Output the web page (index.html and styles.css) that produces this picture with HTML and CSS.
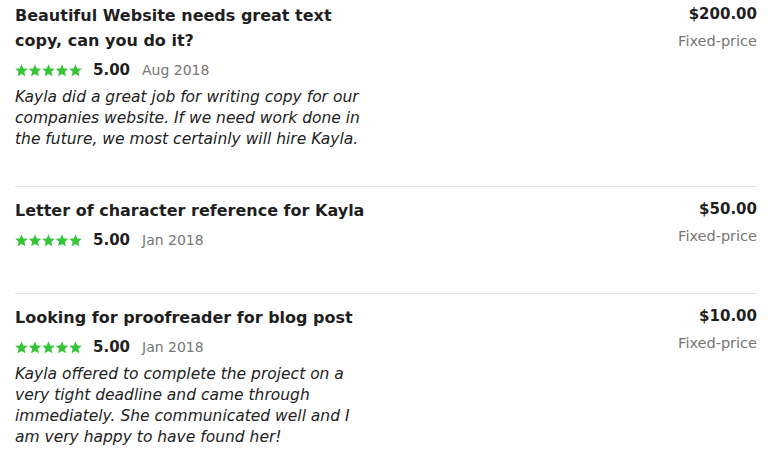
FILE: index.html
```html
<!DOCTYPE html>
<html>
<head>
<meta charset="utf-8">
<link rel="stylesheet" href="styles.css">
</head>
<body>
<svg class="defs" width="0" height="0" aria-hidden="true">
  <defs>
    <path id="star" d="M6.5 0.3 L8.26 4.47 L12.78 4.86 L9.35 7.83 L10.38 12.24 L6.5 9.9 L2.62 12.24 L3.65 7.83 L0.22 4.86 L4.74 4.47 Z"/>
  </defs>
</svg>
<div class="list">
  <div class="item">
    <div class="main">
      <h3 class="title">Beautiful Website needs great text copy, can you do it?</h3>
      <div class="meta">
        <svg class="stars" viewBox="0 0 67 13" width="67" height="13"><g fill="#34c437"><use href="#star"/><use href="#star" x="13.5"/><use href="#star" x="27"/><use href="#star" x="40.5"/><use href="#star" x="54"/></g></svg>
        <span class="score">5.00</span>
        <span class="date">Aug 2018</span>
      </div>
      <p class="comment">Kayla did a great job for writing copy for our companies website. If we need work done in the future, we most certainly will hire Kayla.</p>
    </div>
    <div class="side">
      <div class="price">$200.00</div>
      <div class="type">Fixed-price</div>
    </div>
  </div>
  <div class="item">
    <div class="main">
      <h3 class="title">Letter of character reference for Kayla</h3>
      <div class="meta">
        <svg class="stars" viewBox="0 0 67 13" width="67" height="13"><g fill="#34c437"><use href="#star"/><use href="#star" x="13.5"/><use href="#star" x="27"/><use href="#star" x="40.5"/><use href="#star" x="54"/></g></svg>
        <span class="score">5.00</span>
        <span class="date">Jan 2018</span>
      </div>
    </div>
    <div class="side">
      <div class="price">$50.00</div>
      <div class="type">Fixed-price</div>
    </div>
  </div>
  <div class="item">
    <div class="main">
      <h3 class="title">Looking for proofreader for blog post</h3>
      <div class="meta">
        <svg class="stars" viewBox="0 0 67 13" width="67" height="13"><g fill="#34c437"><use href="#star"/><use href="#star" x="13.5"/><use href="#star" x="27"/><use href="#star" x="40.5"/><use href="#star" x="54"/></g></svg>
        <span class="score">5.00</span>
        <span class="date">Jan 2018</span>
      </div>
      <p class="comment">Kayla offered to complete the project on a very tight deadline and came through immediately. She communicated well and I am very happy to have found her!</p>
    </div>
    <div class="side">
      <div class="price">$10.00</div>
      <div class="type">Fixed-price</div>
    </div>
  </div>
</div>
</body>
</html>
```
FILE: styles.css
```css
html, body {
  margin: 0;
  padding: 0;
  background: #fff;
}
body {
  font-family: "DejaVu Sans", "Noto Sans", sans-serif;
  color: #222;
}
.defs {
  position: absolute;
  width: 0;
  height: 0;
}
.list {
  padding: 0 18px 0 15px;
}
.item {
  display: flex;
  justify-content: space-between;
  border-bottom: 1px solid #e4e4e4;
  padding: 11px 0 36px;
}
.item:first-child {
  padding-top: 3px;
}
.item:last-child {
  border-bottom: none;
  padding-bottom: 0;
}
.main {
  width: 362px;
}
.title {
  margin: 0;
  font-size: 16px;
  font-weight: 700;
  line-height: 25px;
  color: #1f1f1f;
}
.meta {
  display: flex;
  align-items: center;
  height: 18px;
  margin: 8px 0;
}
.stars {
  display: block;
  margin-right: 11px;
}
.score {
  font-weight: 700;
  font-size: 15px;
  margin-right: 12px;
  color: #1f1f1f;
}
.date {
  font-size: 14px;
  color: #767676;
}
.comment {
  margin: 0;
  font-style: italic;
  font-size: 15.5px;
  line-height: 21px;
  color: #222;
}
.side {
  text-align: right;
}
.price {
  font-weight: 700;
  font-size: 15px;
  line-height: 22px;
  color: #1f1f1f;
}
.type {
  font-size: 14.5px;
  line-height: 20px;
  color: #767676;
  margin-top: 6px;
}
```
